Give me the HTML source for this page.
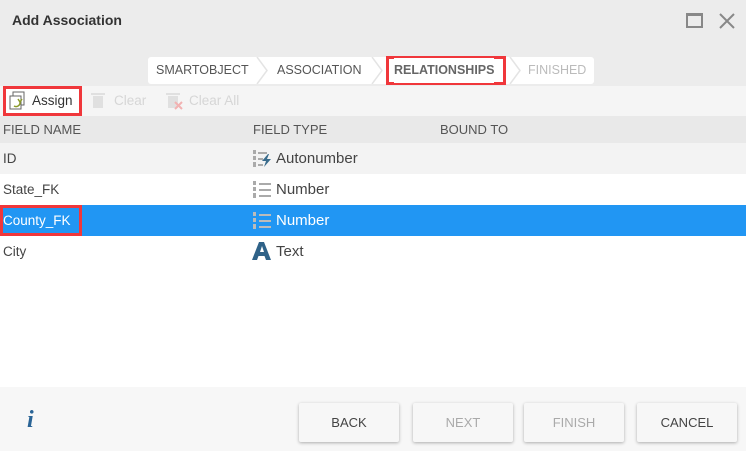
<!DOCTYPE html>
<html><head><style>
*{margin:0;padding:0;box-sizing:border-box}
body{width:746px;height:451px;overflow:hidden;font-family:"Liberation Sans",sans-serif;font-size:13px;color:#444;background:#fff;position:relative}
.abs{position:absolute}
.crumb{position:absolute;top:57px;height:27px;line-height:27px;font-size:12.5px;color:#555;background:#fff}
.row{position:absolute;left:0;width:746px;height:31px;line-height:31px;font-size:13.5px}
.ft{font-size:15px}
.btn{position:absolute;top:403px;height:39px;width:100px;background:#f7f7f7;box-shadow:0 1px 3px rgba(0,0,0,.3);text-align:center;line-height:39px;font-size:13px;color:#444;border-radius:2px}
</style></head><body>
<div class="abs" style="left:0;top:0;width:746px;height:116px;background:#ececec"></div>
<div class="abs" style="left:12px;top:12px;font-weight:bold;font-size:14px;color:#333">Add Association</div>
<div class="abs" style="left:686px;top:13px;width:17px;height:15px;border:2px solid #888;border-top-width:3px"></div>
<svg class="abs" style="left:718px;top:12px" width="18" height="18"><path d="M2 2L16 16M16 2L2 16" stroke="#888" stroke-width="2"/></svg>
<div class="abs" style="left:148px;top:57px;width:446px;height:27px;background:#fff;border-radius:3px"></div>
<div class="crumb" style="left:156px">SMARTOBJECT</div>
<svg class="abs" style="left:255px;top:57px" width="14" height="27"><path d="M2 0L12 13.5L2 27" fill="none" stroke="#e4e4e4" stroke-width="1.5"/></svg>
<div class="crumb" style="left:277px">ASSOCIATION</div>
<svg class="abs" style="left:370px;top:57px" width="14" height="27"><path d="M2 0L12 13.5L2 27" fill="none" stroke="#e4e4e4" stroke-width="1.5"/></svg>
<div class="abs" style="left:386px;top:56px;width:120px;height:29px;border:3px solid #f0373b"></div>
<div class="crumb" style="left:394px;top:58px;height:25px;line-height:25px;font-weight:bold;color:#666">RELATIONSHIPS</div>
<svg class="abs" style="left:508px;top:57px" width="14" height="27"><path d="M2 0L12 13.5L2 27" fill="none" stroke="#e4e4e4" stroke-width="1.5"/></svg>
<div class="crumb" style="left:528px;color:#bbb">FINISHED</div>
<div class="abs" style="left:0;top:86px;width:746px;height:30px;background:#f5f5f5"></div>
<div class="abs" style="left:3px;top:86px;width:79px;height:30px;border:3px solid #f0373b;background:#fff"></div>
<svg class="abs" style="left:8px;top:91px" width="20" height="20"><rect x="5" y="1" width="11" height="13" fill="#fff" stroke="#666"/><rect x="2" y="5" width="11" height="13" fill="#fff" stroke="#666"/><path d="M6 15a4 4 0 0 0 6-4M10 8l2 3 2-3" fill="none" stroke="#8a9a2a" stroke-width="1.5"/></svg>
<div class="abs" style="left:32px;top:93px;color:#333;font-size:13.5px">Assign</div>
<svg class="abs" style="left:91px;top:92px" width="14" height="17"><rect x="2" y="4" width="10" height="12" fill="#e0e0e0"/><rect x="0" y="1" width="14" height="2" fill="#e0e0e0"/></svg>
<div class="abs" style="left:114px;top:93px;color:#d6d6d6;font-size:13.5px">Clear</div>
<svg class="abs" style="left:166px;top:92px" width="18" height="18"><rect x="2" y="4" width="10" height="12" fill="#e0e0e0"/><rect x="0" y="1" width="14" height="2" fill="#e0e0e0"/><path d="M9 10l7 7M16 10l-7 7" stroke="#f2b2b2" stroke-width="2"/></svg>
<div class="abs" style="left:189px;top:93px;color:#d6d6d6;font-size:13.5px">Clear All</div>
<div class="row" style="top:116px;height:27px;line-height:27px;background:#e9e9e9;color:#555;font-size:13px"><span class="abs" style="left:3px">FIELD NAME</span><span class="abs" style="left:253px">FIELD TYPE</span><span class="abs" style="left:440px">BOUND TO</span></div>
<div class="row" style="top:143px;background:#f3f3f3"><span class="abs" style="left:3px">ID</span><span class="abs ft" style="left:276px">Autonumber</span></div>
<div class="row" style="top:174px"><span class="abs" style="left:3px">State_FK</span><span class="abs ft" style="left:276px">Number</span></div>
<div class="row" style="top:205px;background:#2196f3;color:#fff"><span class="abs" style="left:3px">County_FK</span><span class="abs ft" style="left:276px">Number</span></div>
<div class="abs" style="left:0;top:205px;width:82px;height:31px;border:3px solid #f0373b"></div>
<div class="row" style="top:236px"><span class="abs" style="left:3px">City</span><span class="abs ft" style="left:276px">Text</span></div>
<svg class="abs" style="left:253px;top:149px" width="20" height="20"><g fill="#aaa"><rect x="0" y="1" width="3" height="4"/><rect x="0" y="7" width="3" height="4"/><rect x="0" y="13" width="3" height="5"/><rect x="5" y="3" width="9" height="2"/><rect x="5" y="9" width="5" height="2"/><rect x="5" y="15" width="5" height="2"/></g><path d="M15 5L9 12h4l-2 6 7-8h-4l2-5z" fill="#3a6c8c"/></svg>
<svg class="abs" style="left:253px;top:180px" width="20" height="20"><g fill="#aaa"><rect x="0" y="1" width="3" height="4"/><rect x="0" y="7" width="3" height="4"/><rect x="0" y="13" width="3" height="5"/><rect x="6" y="3" width="12" height="2"/><rect x="6" y="9" width="12" height="2"/><rect x="6" y="15" width="12" height="2"/></g></svg>
<svg class="abs" style="left:253px;top:211px" width="20" height="20"><g fill="#bbb"><rect x="0" y="1" width="3" height="4"/><rect x="0" y="7" width="3" height="4"/><rect x="0" y="13" width="3" height="5"/><rect x="6" y="3" width="12" height="2"/><rect x="6" y="9" width="12" height="2"/><rect x="6" y="15" width="12" height="2"/></g></svg>
<svg class="abs" style="left:252px;top:241px" width="20" height="20"><path d="M0 19L7 1h5l7 18h-5l-1.5-4h-6L5 19z M8 11h4l-2-6z" fill="#2f6288" fill-rule="evenodd"/></svg>
<div class="abs" style="left:0;top:387px;width:746px;height:64px;background:#f7f7f7"></div>
<div class="abs" style="left:27px;top:407px;font-family:'Liberation Serif',serif;font-style:italic;font-weight:bold;font-size:24px;color:#2a6496">i</div>
<div class="btn" style="left:299px">BACK</div>
<div class="btn" style="left:413px;color:#aaa">NEXT</div>
<div class="btn" style="left:524px;color:#aaa">FINISH</div>
<div class="btn" style="left:637px">CANCEL</div>
</body></html>
